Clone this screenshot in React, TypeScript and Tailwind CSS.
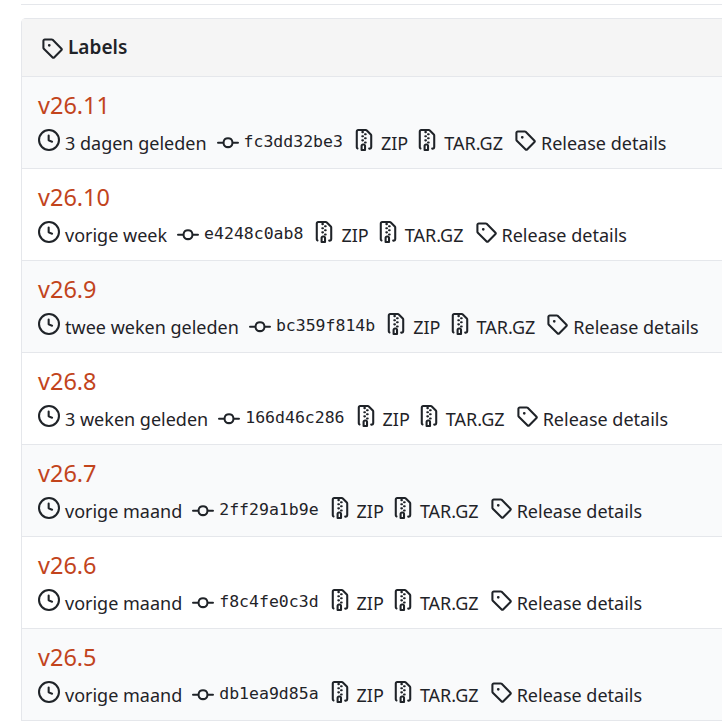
import React from 'react'

const RELEASES = [
  { version: 'v26.11', age: '3 dagen geleden', sha: 'fc3dd32be3' },
  { version: 'v26.10', age: 'vorige week', sha: 'e4248c0ab8' },
  { version: 'v26.9', age: 'twee weken geleden', sha: 'bc359f814b' },
  { version: 'v26.8', age: '3 weken geleden', sha: '166d46c286' },
  { version: 'v26.7', age: 'vorige maand', sha: '2ff29a1b9e' },
  { version: 'v26.6', age: 'vorige maand', sha: 'f8c4fe0c3d' },
  { version: 'v26.5', age: 'vorige maand', sha: 'db1ea9d85a' },
]

const Octicon = ({ d, className }: { d: string; className: string }) => (
  <svg viewBox="0 0 16 16" fill="currentColor" className={className}>
    <path d={d} />
  </svg>
)

const CLOCK =
  'M8 0a8 8 0 1 1 0 16A8 8 0 0 1 8 0ZM1.5 8a6.5 6.5 0 1 0 13 0 6.5 6.5 0 0 0-13 0Zm7-3.25v2.992l2.028.812a.75.75 0 0 1-.557 1.392l-2.5-1A.751.751 0 0 1 7 8.25v-3.5a.75.75 0 0 1 1.5 0Z'
const TAG =
  'M1 7.775V2.75C1 1.784 1.784 1 2.75 1h5.025c.464 0 .91.184 1.238.513l6.25 6.25a1.75 1.75 0 0 1 0 2.474l-5.026 5.026a1.75 1.75 0 0 1-2.474 0l-6.25-6.25A1.752 1.752 0 0 1 1 7.775Zm1.5 0c0 .066.026.13.073.177l6.25 6.25a.25.25 0 0 0 .354 0l5.025-5.025a.25.25 0 0 0 0-.354l-6.25-6.25a.25.25 0 0 0-.177-.073H2.75a.25.25 0 0 0-.25.25ZM6 5a1 1 0 1 1 0 2 1 1 0 0 1 0-2Z'
const COMMIT =
  'M11.93 8.5a4.002 4.002 0 0 1-7.86 0H.75a.75.75 0 0 1 0-1.5h3.32a4.002 4.002 0 0 1 7.86 0h3.32a.75.75 0 0 1 0 1.5Zm-1.43-.75a2.5 2.5 0 1 0-5 0 2.5 2.5 0 0 0 5 0Z'
const ZIP =
  'M3.5 1.75v11.5c0 .09.048.173.126.217a.75.75 0 0 1-.752 1.298A1.748 1.748 0 0 1 2 13.25V1.75C2 .784 2.784 0 3.75 0h5.586c.464 0 .909.185 1.237.513l2.914 2.914c.329.328.513.773.513 1.237v8.586A1.75 1.75 0 0 1 12.25 15h-.5a.75.75 0 0 1 0-1.5h.5a.25.25 0 0 0 .25-.25V4.664a.25.25 0 0 0-.073-.177L9.513 1.573a.25.25 0 0 0-.177-.073H7.25a.75.75 0 0 1 0 1.5h-.5a.75.75 0 0 1 0-1.5h-3a.25.25 0 0 0-.25.25Zm3.75 8.75h.5c.966 0 1.75.784 1.75 1.75v3a.75.75 0 0 1-.75.75h-2.5a.75.75 0 0 1-.75-.75v-3c0-.966.784-1.75 1.75-1.75ZM6 5.25a.75.75 0 0 1 .75-.75h.5a.75.75 0 0 1 0 1.5h-.5A.75.75 0 0 1 6 5.25Zm.75 2.25h.5a.75.75 0 0 1 0 1.5h-.5a.75.75 0 0 1 0-1.5ZM8 6.75A.75.75 0 0 1 8.75 6h.5a.75.75 0 0 1 0 1.5h-.5A.75.75 0 0 1 8 6.75ZM8.75 3h.5a.75.75 0 0 1 0 1.5h-.5a.75.75 0 0 1 0-1.5ZM8 9.75A.75.75 0 0 1 8.75 9h.5a.75.75 0 0 1 0 1.5h-.5A.75.75 0 0 1 8 9.75Zm-1 2.5v2.25h1v-2.25a.25.25 0 0 0-.25-.25h-.5a.25.25 0 0 0-.25.25Z'

const App = () => {
  return (
    <div className="h-[726px] w-[722px] overflow-hidden bg-white pl-[21px] pt-[4px] font-['Noto_Sans',sans-serif] text-[#1f2328]">
      <div className="h-px w-[701px] bg-[#e5e7eb]" />

      <div className="mt-[13px] w-[720px] rounded-tl-[5px] border-l border-t border-[#e5e7eb]">
        {/* Header */}
        <div className="flex h-[58px] items-center gap-[5px] border-b border-[#e5e7eb] bg-[#f5f5f5] pl-[19px]">
          <Octicon d={TAG} className="size-[22px]" />
          <span className="text-[19px] font-semibold">Labels</span>
        </div>

        {RELEASES.map((release, i) => (
          <div
            key={release.version}
            className={`h-[92px] border-b border-[#e5e7eb] pl-[16px] ${i % 2 === 0 ? 'bg-[#f9fafb]' : 'bg-white'}`}
          >
            <div className="pt-[11px] text-[23.5px] leading-[34px] text-[#c2441c]">{release.version}</div>
            <div className="mt-[6px] flex h-[30px] items-center text-[18px] leading-[30px]">
              <Octicon d={CLOCK} className="size-[22px] -translate-y-[3px]" />
              <span className="ml-[5px]">{release.age}</span>
              <Octicon d={COMMIT} className="ml-[10px] size-[22px]" />
              <span className="ml-[5px] -translate-y-px font-['DejaVu_Sans_Mono',monospace] text-[16.5px]">{release.sha}</span>
              <Octicon d={ZIP} className="ml-[10px] size-[22px] -translate-y-[3px]" />
              <span className="ml-[6px]">ZIP</span>
              <Octicon d={ZIP} className="ml-[8px] size-[22px] -translate-y-[3px]" />
              <span className="ml-[6px]">TAR.GZ</span>
              <Octicon d={TAG} className="ml-[11px] size-[22px] -translate-y-[3px]" />
              <span className="ml-[5px]">Release details</span>
            </div>
          </div>
        ))}
      </div>
    </div>
  )
}

export default App
